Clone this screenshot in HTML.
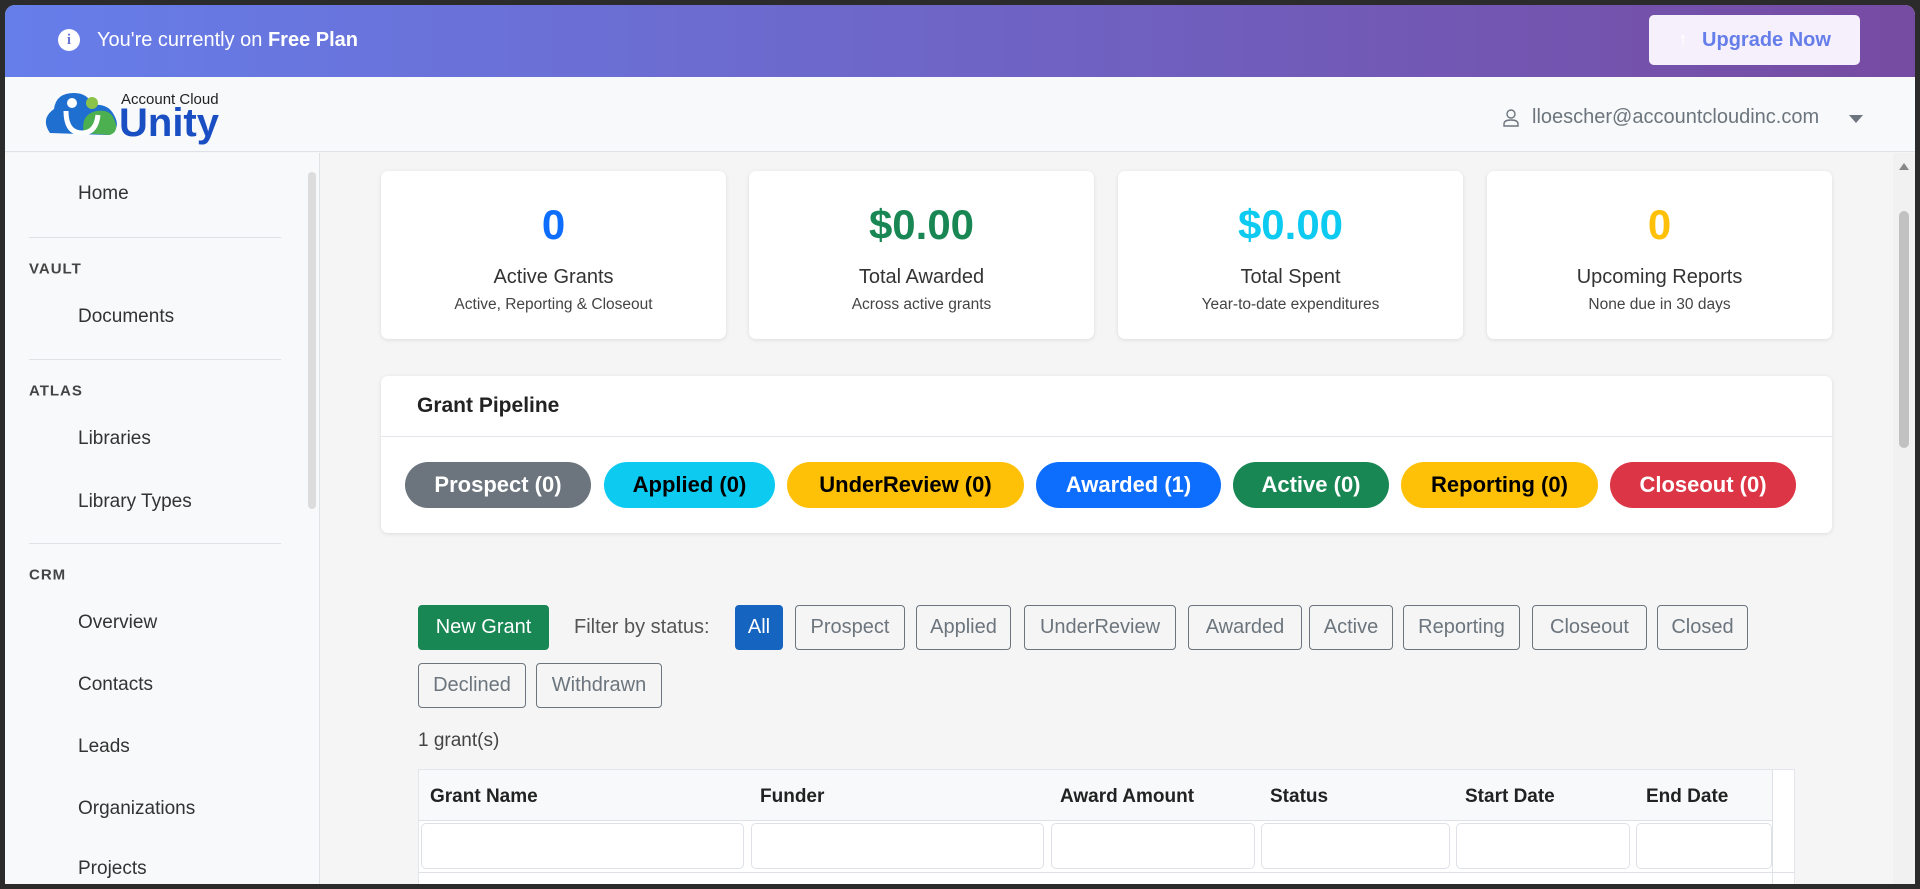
<!DOCTYPE html>
<html><head><meta charset="utf-8"><style>
*{box-sizing:border-box;margin:0;padding:0}
body{width:1920px;height:889px;background:#2b2b2b;font-family:"Liberation Sans",Arial,sans-serif;overflow:hidden;position:relative}
.win{position:absolute;left:5px;top:5px;width:1910px;height:879px;background:#f5f5f5;border-radius:10px 10px 0 0;overflow:hidden}
.abs{position:absolute}
.banner{left:0;top:0;width:1910px;height:72px;background:linear-gradient(90deg,#667eea,#764ba2);color:#fff;font-size:20px}
.hdr{left:0;top:72px;width:1910px;height:75px;background:#f8f9fa;border-bottom:1px solid #dee2e6}
.side{left:0;top:148px;width:315px;height:731px;background:#f8f9fa;border-right:1px solid #dee2e6}
.si{position:absolute;left:73px;font-size:19px;color:#333;transform:translateY(-50%)}
.sh{position:absolute;left:24px;font-size:15px;font-weight:bold;color:#444;letter-spacing:1px;transform:translateY(-50%)}
.sep{position:absolute;left:24px;width:252px;height:1px;background:#dee2e6}
.card{position:absolute;top:166px;width:345px;height:168px;background:#fff;border-radius:7px;box-shadow:0 1px 4px rgba(0,0,0,.1);text-align:center}
.card .n{position:absolute;top:30px;width:100%;font-size:42px;font-weight:bold}
.card .l{position:absolute;top:95px;width:100%;font-size:20px;color:#333}
.card .s{position:absolute;top:125px;width:100%;font-size:15.5px;color:#444}
.pill{position:absolute;top:457px;height:46px;border-radius:23px;font-size:22px;font-weight:bold;display:flex;align-items:center;justify-content:center}
.btn{position:absolute;height:45px;border:1px solid #6c757d;border-radius:4px;font-size:20px;color:#6c757d;display:flex;align-items:center;justify-content:center;background:transparent}
.th{position:absolute;top:781px;font-size:19px;font-weight:bold;color:#222}
.inp{position:absolute;top:818px;height:46px;background:#fff;border:1px solid #dee2e6;border-radius:5px}
</style></head><body>
<div class="win">
<div class="abs banner">
 <div class="abs" style="left:53px;top:24px;width:22px;height:22px;border-radius:50%;background:#fff;color:#6a75d8;font-size:15px;font-weight:bold;text-align:center;line-height:22px;font-family:'Liberation Serif',serif">i</div>
 <div class="abs" style="left:92px;top:24px">You're currently on <b>Free Plan</b></div>
 <div class="abs" style="left:1644px;top:10px;width:211px;height:50px;background:#f5f0fb;border-radius:5px;color:#667eea;font-weight:bold;font-size:20px;display:flex;align-items:center;justify-content:center"><span style="color:#fff;margin-right:14px;font-size:20px">&#8593;</span>Upgrade Now</div>
</div>
<div class="abs hdr">
 <svg class="abs" style="left:37px;top:12px" width="80" height="52" viewBox="0 0 80 52">
  <path d="M8 44 q-10 -14 4 -24 q2 -16 20 -16 q14 0 18 12 q16 -2 22 10 q8 14 -6 20 z" fill="#1e6fd0"/>
  <path d="M42 44 q-4 -18 12 -22 q14 -2 18 8 q6 12 -4 16 z" fill="#4caf50"/>
  <path d="M24 22 q0 22 16 22 q14 0 16 -18" stroke="#fff" stroke-width="5" fill="none"/>
  <circle cx="30" cy="14" r="5" fill="#fff"/><circle cx="50" cy="14" r="6" fill="#8bc34a"/>
 </svg>
 <div class="abs" style="left:116px;top:14px;font-size:15px;color:#222">Account Cloud</div>
 <div class="abs" style="left:114px;top:24px;font-size:40px;font-weight:bold;color:#1a4fc4">Unity</div>
 <svg class="abs" style="left:1498px;top:32px" width="16" height="18" viewBox="0 0 16 18"><circle cx="8" cy="5" r="4" fill="none" stroke="#6c757d" stroke-width="1.4"/><path d="M1 17 v-2 q0-4 7-4 q7 0 7 4 v2 z" fill="none" stroke="#6c757d" stroke-width="1.4"/></svg>
 <div class="abs" style="left:1527px;top:29px;font-size:20px;color:#6c757d">lloescher@accountcloudinc.com</div>
 <div class="abs" style="left:1844px;top:38px;width:0;height:0;border-left:7px solid transparent;border-right:7px solid transparent;border-top:8px solid #6c757d"></div>
</div>
<div class="abs side">
 <div class="si" style="top:41px">Home</div>
 <div class="sep" style="top:84px"></div>
 <div class="sh" style="top:116px">VAULT</div>
 <div class="si" style="top:164px">Documents</div>
 <div class="sep" style="top:206px"></div>
 <div class="sh" style="top:238px">ATLAS</div>
 <div class="si" style="top:286px">Libraries</div>
 <div class="si" style="top:349px">Library Types</div>
 <div class="sep" style="top:390px"></div>
 <div class="sh" style="top:422px">CRM</div>
 <div class="si" style="top:470px">Overview</div>
 <div class="si" style="top:532px">Contacts</div>
 <div class="si" style="top:594px">Leads</div>
 <div class="si" style="top:656px">Organizations</div>
 <div class="si" style="top:716px">Projects</div>
 <div class="abs" style="left:303px;top:19px;width:8px;height:337px;background:#dcdcdc;border-radius:4px"></div>
</div>
<div class="abs" style="left:1888px;top:148px;width:22px;height:731px;background:#f1f1f1"></div>
<div class="abs" style="left:1894px;top:206px;width:10px;height:237px;background:#c1c1c1;border-radius:5px"></div>
<div class="abs" style="left:1894px;top:158px;width:0;height:0;border-left:5px solid transparent;border-right:5px solid transparent;border-bottom:7px solid #888"></div>

<div class="card" style="left:376px"><div class="n" style="color:#0d6efd">0</div><div class="l">Active Grants</div><div class="s">Active, Reporting &amp; Closeout</div></div>
<div class="card" style="left:744px"><div class="n" style="color:#198754">$0.00</div><div class="l">Total Awarded</div><div class="s">Across active grants</div></div>
<div class="card" style="left:1113px"><div class="n" style="color:#0dcaf0">$0.00</div><div class="l">Total Spent</div><div class="s">Year-to-date expenditures</div></div>
<div class="card" style="left:1482px"><div class="n" style="color:#ffc107">0</div><div class="l">Upcoming Reports</div><div class="s">None due in 30 days</div></div>

<div class="abs" style="left:376px;top:371px;width:1451px;height:157px;background:#fff;border-radius:7px;box-shadow:0 1px 4px rgba(0,0,0,.1)">
 <div class="abs" style="left:36px;top:18px;font-size:21px;font-weight:bold;color:#222">Grant Pipeline</div>
 <div class="abs" style="left:0;top:60px;width:100%;height:1px;background:#e3e6ea"></div>
</div>
<div class="pill" style="left:400px;width:186px;background:#6c757d;color:#fff">Prospect (0)</div>
<div class="pill" style="left:599px;width:171px;background:#0dcaf0;color:#000">Applied (0)</div>
<div class="pill" style="left:782px;width:237px;background:#ffc107;color:#000">UnderReview (0)</div>
<div class="pill" style="left:1031px;width:185px;background:#0d6efd;color:#fff">Awarded (1)</div>
<div class="pill" style="left:1228px;width:156px;background:#198754;color:#fff">Active (0)</div>
<div class="pill" style="left:1396px;width:197px;background:#ffc107;color:#000">Reporting (0)</div>
<div class="pill" style="left:1605px;width:186px;background:#dc3545;color:#fff">Closeout (0)</div>

<div class="btn" style="left:413px;top:600px;width:131px;background:#198754;border-color:#198754;color:#fff">New Grant</div>
<div class="abs" style="left:569px;top:611px;font-size:20px;color:#555">Filter by status:</div>
<div class="btn" style="left:730px;top:600px;width:48px;background:#1565c0;border-color:#1565c0;color:#fff">All</div>
<div class="btn" style="left:790px;top:600px;width:110px">Prospect</div>
<div class="btn" style="left:911px;top:600px;width:95px">Applied</div>
<div class="btn" style="left:1019px;top:600px;width:152px">UnderReview</div>
<div class="btn" style="left:1183px;top:600px;width:114px">Awarded</div>
<div class="btn" style="left:1304px;top:600px;width:84px">Active</div>
<div class="btn" style="left:1398px;top:600px;width:117px">Reporting</div>
<div class="btn" style="left:1527px;top:600px;width:115px">Closeout</div>
<div class="btn" style="left:1652px;top:600px;width:91px">Closed</div>
<div class="btn" style="left:413px;top:658px;width:108px">Declined</div>
<div class="btn" style="left:531px;top:658px;width:126px">Withdrawn</div>
<div class="abs" style="left:413px;top:725px;font-size:19px;color:#444">1 grant(s)</div>

<div class="abs" style="left:413px;top:764px;width:1377px;height:120px;background:#fff;border:1px solid #e3e6ea"></div>
<div class="abs" style="left:414px;top:765px;width:1354px;height:51px;background:#f8f9fa;border-bottom:1px solid #dee2e6"></div>
<div class="abs" style="left:1767px;top:765px;width:1px;height:120px;background:#dee2e6"></div>
<div class="th" style="left:425px">Grant Name</div>
<div class="th" style="left:755px">Funder</div>
<div class="th" style="left:1055px">Award Amount</div>
<div class="th" style="left:1265px">Status</div>
<div class="th" style="left:1460px">Start Date</div>
<div class="th" style="left:1641px">End Date</div>
<div class="inp" style="left:416px;width:323px"></div>
<div class="inp" style="left:746px;width:293px"></div>
<div class="inp" style="left:1046px;width:204px"></div>
<div class="inp" style="left:1256px;width:189px"></div>
<div class="inp" style="left:1451px;width:174px"></div>
<div class="inp" style="left:1631px;width:136px"></div>
<div class="abs" style="left:414px;top:867px;width:1376px;height:1px;background:#dee2e6"></div>
</div>
</body></html>
